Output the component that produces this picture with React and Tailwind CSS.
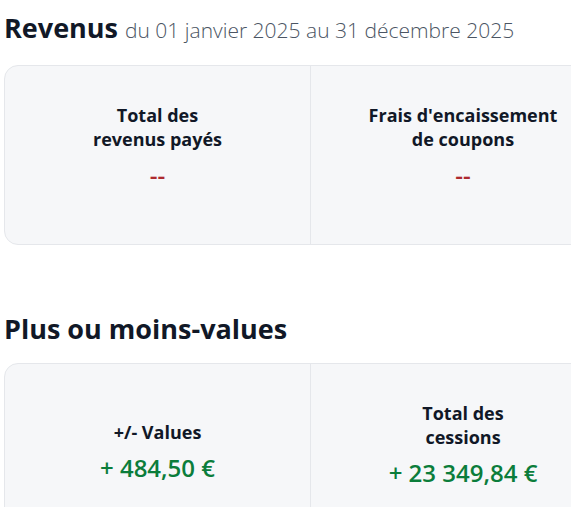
import React from 'react';

// Stat block: title (may wrap on explicit lines) + value underneath
const Stat = ({ lines, value, tone = 'neutral', className = '' }) => (
  <div className={`flex flex-col items-center justify-center text-center ${className}`}>
    <div className="text-[18px] leading-6 font-bold text-[#111827]">
      {lines.map((l, i) => (
        <div key={i}>{l}</div>
      ))}
    </div>
    <div
      className={`mt-2 text-[24px] leading-8 font-semibold ${
        tone === 'empty' ? 'text-[#ad2a2f]' : 'text-[#0b7d3b]'
      }`}
    >
      {value}
    </div>
  </div>
);

const Card = ({ children }) => (
  <div className="w-[612px] h-[180px] grid grid-cols-2 bg-[#f6f7f9] border border-[#e5e7eb] rounded-[14px]">
    {children}
  </div>
);

export default function App() {
  return (
    <div className="w-full min-h-screen bg-white overflow-hidden pl-1" style={{ fontFamily: '"Open Sans", sans-serif' }}>
      {/* Revenus */}
      <h1 className="mt-[10px] mb-[15px] leading-9 text-[#111827]">
        <span className="text-[27px] font-bold">Revenus</span>
        <span className="ml-[7px] text-[21px] font-light text-[#4b5563]">du 01 janvier 2025 au 31 décembre 2025</span>
      </h1>

      <Card>
        <Stat lines={['Total des', 'revenus payés']} value="--" tone="empty" className="pb-4" />
        <Stat
          lines={["Frais d'encaissement", 'de coupons']}
          value="--"
          tone="empty"
          className="pb-4 border-l border-[#e5e7eb]"
        />
      </Card>

      {/* Plus ou moins-values */}
      <h2 className="mt-[66px] mb-[16px] text-[27px] leading-9 font-bold text-[#111827]">Plus ou moins-values</h2>

      <Card>
        <Stat lines={['+/- Values']} value="+ 484,50 €" className="pb-[2px]" />
        <Stat
          lines={['Total des', 'cessions']}
          value="+ 23 349,84 €"
          className="pb-4 border-l border-[#e5e7eb]"
        />
      </Card>
    </div>
  );
}
